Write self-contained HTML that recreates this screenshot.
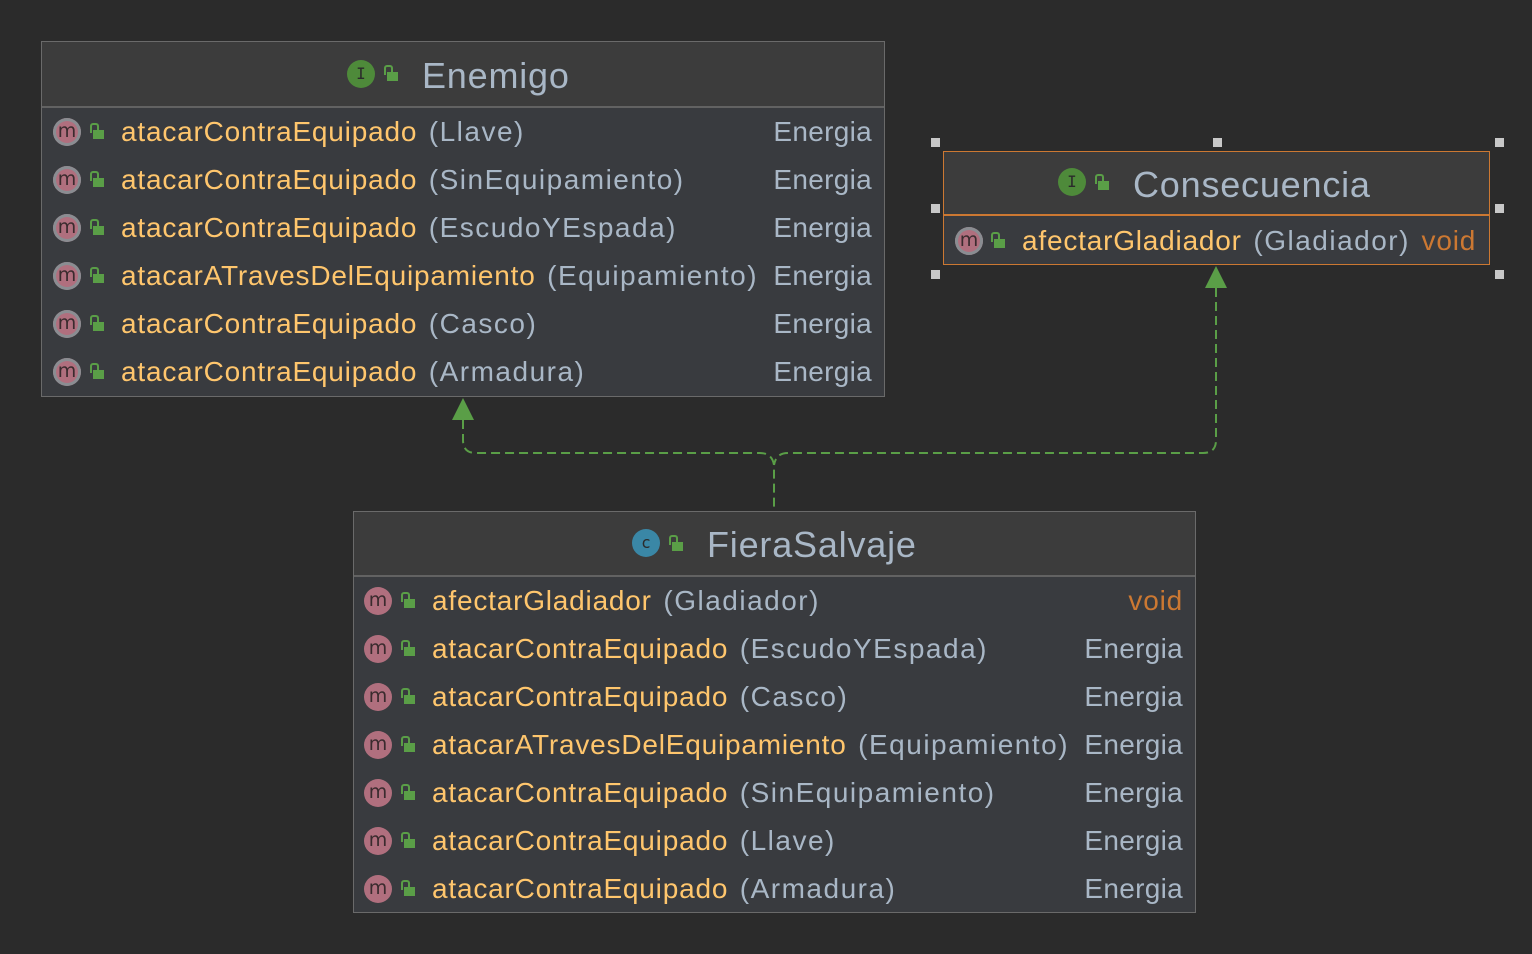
<!DOCTYPE html>
<html><head><meta charset="utf-8"><style>
*{margin:0;padding:0;box-sizing:border-box}
body{width:1532px;height:954px;background:#2b2b2b;position:relative;overflow:hidden;font-family:"Liberation Sans",sans-serif}
.box{position:absolute;background:#393b3f;border:1px solid #6a6a6a}
.hdr{position:absolute;left:0;right:0;top:0;background:#3c3c3c;border-bottom:2px solid #626262}
.t{position:absolute;white-space:nowrap;font-size:28px;line-height:32px;letter-spacing:0.8px;word-spacing:3px}
.y{color:#ffc66d}.p{color:#a9b7c6}.o{color:#cc7832}
.y .p{letter-spacing:1.5px}
.e{letter-spacing:0.3px}
.title{position:absolute;font-size:36px;color:#a9b7c6;white-space:nowrap;line-height:40px;letter-spacing:0.8px}
.mi{position:absolute;width:28px;height:28px;border-radius:50%;background:#b06f7e;color:#3a2b2e;font-size:19px;line-height:26px;text-align:center;font-family:"DejaVu Sans",sans-serif}
.mi.r{box-shadow:0 0 0 3px #8a8d92 inset}
.ic{position:absolute;width:28px;height:28px;border-radius:50%;color:#2b2b2b;font-size:16px;line-height:28px;text-align:center;font-family:"DejaVu Sans Mono",monospace}
.lk{position:absolute;width:16px;height:18px}
.lk:before{content:"";position:absolute;left:0;top:0;width:5px;height:8px;border:2px solid #5a9e47;border-bottom:none;border-radius:3px 3px 0 0}
.lk:after{content:"";position:absolute;left:3px;top:7px;width:11px;height:9px;background:#5a9e47}
.h{position:absolute;width:9px;height:9px;background:#c8c8c8}
</style></head><body>

<svg style="position:absolute;left:0;top:0" width="1532" height="954">
<g fill="none" stroke="#5a9e47" stroke-width="2" stroke-dasharray="9,5">
<path d="M463 420 V440 Q463 453 476 453 H760 Q772 453 774 465 V510"/>
<path d="M1216 288 V440 Q1216 453 1203 453 H788 Q776 453 774 465"/>
</g>
<polygon points="463,398 452,420 474,420" fill="#5a9e47"/>
<polygon points="1216,266 1205,288 1227,288" fill="#5a9e47"/>
</svg>

<!-- Enemigo -->
<div class="box" style="left:41px;top:41px;width:844px;height:356px">
<div class="hdr" style="height:66px"></div>
</div>
<div class="ic" style="left:347px;top:60px;background:#4e8a3a">I</div>
<div class="lk" style="left:384px;top:65px"></div>
<div class="title" style="left:422px;top:56px">Enemigo</div>

<div class="mi r" style="left:53px;top:118px">m</div><div class="lk" style="left:90px;top:123px"></div>
<div class="t y" style="left:121px;top:116px">atacarContraEquipado <span class="p">(Llave)</span></div>
<div class="t p e" style="right:660px;top:116px">Energia</div>
<div class="mi r" style="left:53px;top:166px">m</div><div class="lk" style="left:90px;top:171px"></div>
<div class="t y" style="left:121px;top:164px">atacarContraEquipado <span class="p">(SinEquipamiento)</span></div>
<div class="t p e" style="right:660px;top:164px">Energia</div>
<div class="mi r" style="left:53px;top:214px">m</div><div class="lk" style="left:90px;top:219px"></div>
<div class="t y" style="left:121px;top:212px">atacarContraEquipado <span class="p">(EscudoYEspada)</span></div>
<div class="t p e" style="right:660px;top:212px">Energia</div>
<div class="mi r" style="left:53px;top:262px">m</div><div class="lk" style="left:90px;top:267px"></div>
<div class="t y" style="left:121px;top:260px">atacarATravesDelEquipamiento <span class="p">(Equipamiento)</span></div>
<div class="t p e" style="right:660px;top:260px">Energia</div>
<div class="mi r" style="left:53px;top:310px">m</div><div class="lk" style="left:90px;top:315px"></div>
<div class="t y" style="left:121px;top:308px">atacarContraEquipado <span class="p">(Casco)</span></div>
<div class="t p e" style="right:660px;top:308px">Energia</div>
<div class="mi r" style="left:53px;top:358px">m</div><div class="lk" style="left:90px;top:363px"></div>
<div class="t y" style="left:121px;top:356px">atacarContraEquipado <span class="p">(Armadura)</span></div>
<div class="t p e" style="right:660px;top:356px">Energia</div>

<!-- Consecuencia -->
<div class="box" style="left:943px;top:151px;width:547px;height:114px;border-color:#cc7832">
<div class="hdr" style="height:64px;border-bottom-color:#cc7832"></div>
</div>
<div class="ic" style="left:1058px;top:168px;background:#4e8a3a">I</div>
<div class="lk" style="left:1095px;top:174px"></div>
<div class="title" style="left:1133px;top:165px">Consecuencia</div>
<div class="mi r" style="left:955px;top:227px">m</div><div class="lk" style="left:991px;top:232px"></div>
<div class="t y" style="left:1022px;top:225px">afectarGladiador <span class="p">(Gladiador)</span> <span class="o">void</span></div>
<div class="h" style="left:931px;top:138px"></div><div class="h" style="left:1213px;top:138px"></div><div class="h" style="left:1495px;top:138px"></div>
<div class="h" style="left:931px;top:204px"></div><div class="h" style="left:1495px;top:204px"></div>
<div class="h" style="left:931px;top:270px"></div><div class="h" style="left:1495px;top:270px"></div>

<!-- FieraSalvaje -->
<div class="box" style="left:353px;top:511px;width:843px;height:402px">
<div class="hdr" style="height:65px"></div>
</div>
<div class="ic" style="left:632px;top:529px;background:#3a87a6">c</div>
<div class="lk" style="left:669px;top:535px"></div>
<div class="title" style="left:707px;top:525px">FieraSalvaje</div>

<div class="mi" style="left:364px;top:587px">m</div><div class="lk" style="left:401px;top:592px"></div>
<div class="t y" style="left:432px;top:585px">afectarGladiador <span class="p">(Gladiador)</span></div>
<div class="t o" style="right:349px;top:585px">void</div>
<div class="mi" style="left:364px;top:635px">m</div><div class="lk" style="left:401px;top:640px"></div>
<div class="t y" style="left:432px;top:633px">atacarContraEquipado <span class="p">(EscudoYEspada)</span></div>
<div class="t p e" style="right:349px;top:633px">Energia</div>
<div class="mi" style="left:364px;top:683px">m</div><div class="lk" style="left:401px;top:688px"></div>
<div class="t y" style="left:432px;top:681px">atacarContraEquipado <span class="p">(Casco)</span></div>
<div class="t p e" style="right:349px;top:681px">Energia</div>
<div class="mi" style="left:364px;top:731px">m</div><div class="lk" style="left:401px;top:736px"></div>
<div class="t y" style="left:432px;top:729px">atacarATravesDelEquipamiento <span class="p">(Equipamiento)</span></div>
<div class="t p e" style="right:349px;top:729px">Energia</div>
<div class="mi" style="left:364px;top:779px">m</div><div class="lk" style="left:401px;top:784px"></div>
<div class="t y" style="left:432px;top:777px">atacarContraEquipado <span class="p">(SinEquipamiento)</span></div>
<div class="t p e" style="right:349px;top:777px">Energia</div>
<div class="mi" style="left:364px;top:827px">m</div><div class="lk" style="left:401px;top:832px"></div>
<div class="t y" style="left:432px;top:825px">atacarContraEquipado <span class="p">(Llave)</span></div>
<div class="t p e" style="right:349px;top:825px">Energia</div>
<div class="mi" style="left:364px;top:875px">m</div><div class="lk" style="left:401px;top:880px"></div>
<div class="t y" style="left:432px;top:873px">atacarContraEquipado <span class="p">(Armadura)</span></div>
<div class="t p e" style="right:349px;top:873px">Energia</div>
</body></html>
